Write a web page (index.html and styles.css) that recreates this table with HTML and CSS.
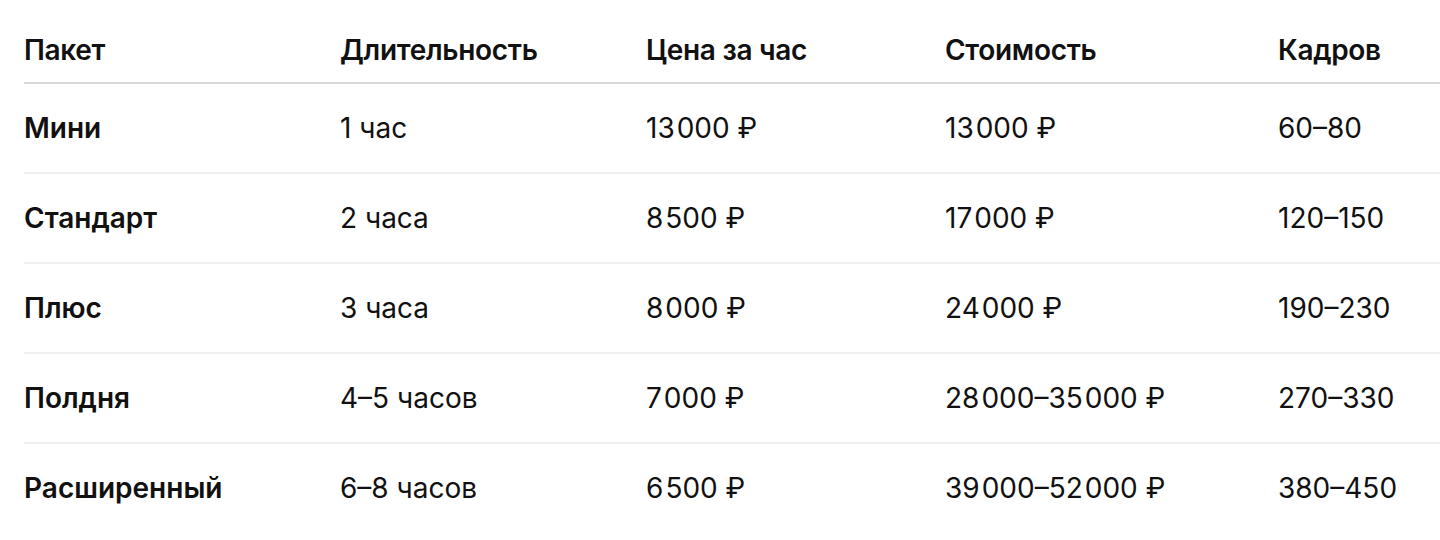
FILE: index.html
```html
<!DOCTYPE html>
<html lang="ru">
<head>
<meta charset="utf-8">
<link rel="stylesheet" href="styles.css">
</head>
<body>
<table class="prices">
  <colgroup>
    <col class="c1"><col class="c2"><col class="c3"><col class="c4"><col class="c5">
  </colgroup>
  <thead>
    <tr><th>Пакет</th><th>Длительность</th><th>Цена за час</th><th>Стоимость</th><th>Кадров</th></tr>
  </thead>
  <tbody>
    <tr><td class="name">Мини</td><td>1 час</td><td>13<span class="ts"></span>000 ₽</td><td>13<span class="ts"></span>000 ₽</td><td>60–80</td></tr>
    <tr><td class="name">Стандарт</td><td>2 часа</td><td>8<span class="ts"></span>500 ₽</td><td>17<span class="ts"></span>000 ₽</td><td>120–150</td></tr>
    <tr><td class="name">Плюс</td><td>3 часа</td><td>8<span class="ts"></span>000 ₽</td><td>24<span class="ts"></span>000 ₽</td><td>190–230</td></tr>
    <tr><td class="name">Полдня</td><td>4–5 часов</td><td>7<span class="ts"></span>000 ₽</td><td>28<span class="ts"></span>000–35<span class="ts"></span>000 ₽</td><td>270–330</td></tr>
    <tr><td class="name">Расширенный</td><td>6–8 часов</td><td>6<span class="ts"></span>500 ₽</td><td>39<span class="ts"></span>000–52<span class="ts"></span>000 ₽</td><td>380–450</td></tr>
  </tbody>
</table>
</body>
</html>
```

FILE: styles.css
```css
html, body {
  margin: 0;
  padding: 0;
  background: #ffffff;
}
body {
  font-family: Inter, "Noto Sans", sans-serif;
  color: #111111;
  padding: 18px 0 0 24px;
}
.prices {
  width: 1416px;
  border-collapse: collapse;
  table-layout: fixed;
  font-size: 28px;
  line-height: 34px;
}
.c1 { width: 316px; }
.c2 { width: 306px; }
.c3 { width: 299px; }
.c4 { width: 333px; }
.c5 { width: 162px; }
.prices th {
  text-align: left;
  font-weight: 600;
  letter-spacing: -0.3px;
  height: 64px;
  padding: 0;
  vertical-align: middle;
  border-bottom: 2px solid #d9d9d9;
}
.prices td {
  height: 88px;
  padding: 0;
  vertical-align: middle;
  font-weight: 400;
  border-bottom: 2px solid #f0f0f0;
}
.prices tbody tr:last-child td {
  border-bottom: none;
}
.prices td.name {
  font-weight: 600;
}
.ts {
  display: inline-block;
  width: 2px;
}
```
